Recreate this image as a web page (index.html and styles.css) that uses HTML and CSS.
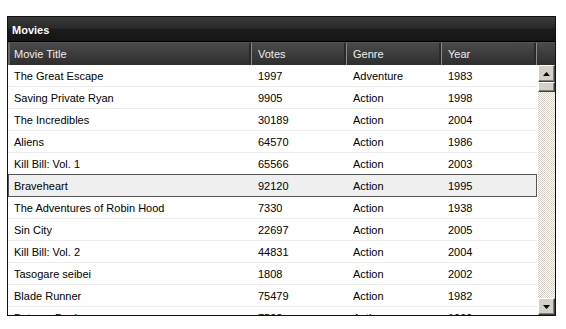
FILE: index.html
```html
<!DOCTYPE html>
<html>
<head>
<meta charset="utf-8">
<link rel="stylesheet" href="styles.css">
</head>
<body>
<div class="grid">
  <div class="caption">Movies</div>
  <div class="head">
    <div class="hc c1">Movie Title</div>
    <div class="hc c2">Votes</div>
    <div class="hc c3">Genre</div>
    <div class="hc c4">Year</div>
    <div class="hc cfill"></div>
  </div>
  <div class="body">
    <div class="rows">
      <div class="row"><div class="c c1">The Great Escape</div><div class="c c2">1997</div><div class="c c3">Adventure</div><div class="c c4">1983</div></div>
      <div class="row"><div class="c c1">Saving Private Ryan</div><div class="c c2">9905</div><div class="c c3">Action</div><div class="c c4">1998</div></div>
      <div class="row"><div class="c c1">The Incredibles</div><div class="c c2">30189</div><div class="c c3">Action</div><div class="c c4">2004</div></div>
      <div class="row"><div class="c c1">Aliens</div><div class="c c2">64570</div><div class="c c3">Action</div><div class="c c4">1986</div></div>
      <div class="row"><div class="c c1">Kill Bill: Vol. 1</div><div class="c c2">65566</div><div class="c c3">Action</div><div class="c c4">2003</div></div>
      <div class="row sel"><div class="c c1">Braveheart</div><div class="c c2">92120</div><div class="c c3">Action</div><div class="c c4">1995</div></div>
      <div class="row"><div class="c c1">The Adventures of Robin Hood</div><div class="c c2">7330</div><div class="c c3">Action</div><div class="c c4">1938</div></div>
      <div class="row"><div class="c c1">Sin City</div><div class="c c2">22697</div><div class="c c3">Action</div><div class="c c4">2005</div></div>
      <div class="row"><div class="c c1">Kill Bill: Vol. 2</div><div class="c c2">44831</div><div class="c c3">Action</div><div class="c c4">2004</div></div>
      <div class="row"><div class="c c1">Tasogare seibei</div><div class="c c2">1808</div><div class="c c3">Action</div><div class="c c4">2002</div></div>
      <div class="row"><div class="c c1">Blade Runner</div><div class="c c2">75479</div><div class="c c3">Action</div><div class="c c4">1982</div></div>
      <div class="row"><div class="c c1">Batman Begins</div><div class="c c2">7503</div><div class="c c3">Action</div><div class="c c4">1999</div></div>
    </div>
    <div class="sbar">
      <div class="sbtn"><svg width="7" height="4" viewBox="0 0 7 4"><path d="M3.5 0 L7 4 L0 4 Z" fill="#000"/></svg></div>
      <div class="thumb"></div>
      <div class="track"></div>
      <div class="sbtn"><svg width="7" height="4" viewBox="0 0 7 4"><path d="M0 0 L7 0 L3.5 4 Z" fill="#000"/></svg></div>
    </div>
  </div>
</div>
</body>
</html>
```
FILE: styles.css
```css
html, body { margin: 0; padding: 0; background: #fff; }
body { padding: 16px 0 0 7px; font-family: "Liberation Sans", Arial, sans-serif; font-size: 11px; }

.grid {
  width: 547px;
  height: 298px;
  border: 1px solid #111;
  display: flex;
  flex-direction: column;
  overflow: hidden;
}

.caption {
  height: 25px;
  flex: none;
  box-sizing: border-box;
  padding: 7px 0 0 4px;
  color: #fff;
  font-weight: bold;
  font-size: 11px;
  background: linear-gradient(#3a3a3a 0, #2a2a2a 11px, #1c1c1c 12px, #141414 25px);
  border-bottom: 1px solid #000;
}

.head {
  height: 23px;
  flex: none;
  display: flex;
  background: linear-gradient(#4a4a4a, #2e2e2e);
  border-top: 1px solid #555;
  box-sizing: border-box;
  color: #eee;
  font-size: 11px;
}
.hc {
  box-sizing: border-box;
  padding: 5px 0 0 6px;
  border-right: 1px solid #8a8a8a;
  box-shadow: inset -2px 0 0 #2a2a2a;
}
.hc.c1 { border-left: 2px solid #6a6a6a; width: 244px; padding-left: 4px; }
.hc.cfill { flex: 1; border-right: none; box-shadow: none; }

.c1 { width: 244px; }
.c2, .c3, .c4 { width: 95px; }

.body {
  flex: 1;
  display: flex;
  min-height: 0;
}
.rows {
  width: 530px;
  overflow: hidden;
}
.row {
  display: flex;
  height: 22px;
  box-sizing: border-box;
  border-bottom: 1px solid #ececec;
  width: 529px;
}
.c {
  box-sizing: border-box;
  padding: 5px 0 0 6px;
  white-space: nowrap;
  color: #000;
}
.row.sel {
  background: #efefef;
  box-shadow: inset 0 0 0 1px #555;
  margin-top: -1px;
  height: 23px;
  padding-top: 1px;
  border-bottom: none;
}

.sbar {
  width: 17px;
  display: flex;
  flex-direction: column;
  background-color: #fff;
  background-image: repeating-conic-gradient(#d4d0c8 0 25%, #fff 0 50%);
  background-size: 2px 2px;
}
.sbtn, .thumb {
  box-sizing: border-box;
  background: #d4d0c8;
  border-top: 1px solid #fff;
  border-left: 1px solid #fff;
  border-right: 1px solid #404040;
  border-bottom: 1px solid #404040;
  box-shadow: inset -1px -1px 0 #808080;
}
.sbtn {
  height: 17px;
  display: flex;
  align-items: center;
  justify-content: center;
}
.thumb { height: 10px; }
.track { flex: 1; }
```
